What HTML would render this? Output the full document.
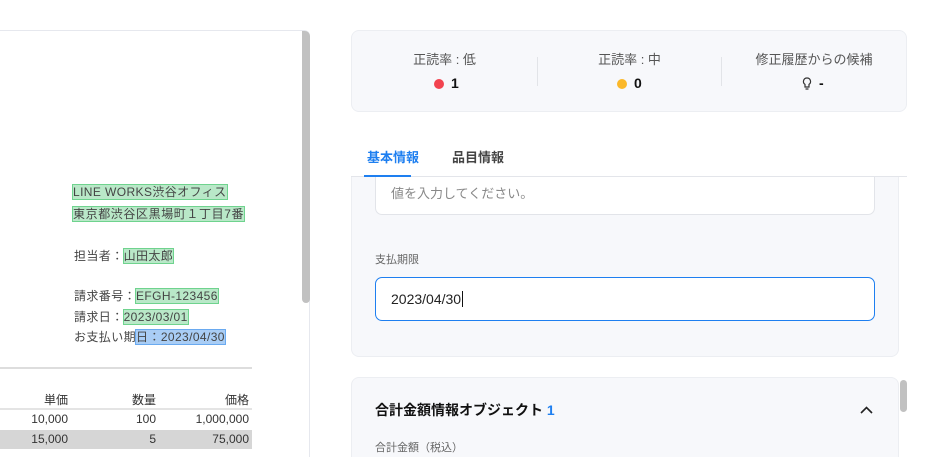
<!DOCTYPE html>
<html><head><meta charset="utf-8"><style>
*{box-sizing:border-box;margin:0;padding:0}
html,body{width:932px;height:457px;overflow:hidden}
body{background:#fff;font-family:"Liberation Sans","Noto Sans CJK JP",sans-serif;position:relative}
.a{position:absolute}
.doc{font-size:12px;color:#444;white-space:nowrap;letter-spacing:0.4px}
.g{background:#b9e8c8;outline:1.5px solid #6fd38e}
.b{background:#a9cdf5;outline:1.5px solid #6aaaf0}
.r{text-align:right;font-size:12px;color:#333}
</style></head><body>
<div class="a" style="left:0;top:0;width:932px;height:457px;overflow:hidden">
<div class="a" style="left:-10px;top:30px;width:320px;height:427px;border:1px solid #e6e8ee;border-bottom:none;border-radius:0 6px 0 0;background:#fff"></div>
<div class="a" style="left:302px;top:31px;width:8px;height:272px;background:#c1c1c1;border-radius:0 5px 4px 4px"></div>
<div class="a doc" style="left:73px;top:183px"><span class="g">LINE WORKS渋谷オフィス</span></div>
<div class="a doc" style="left:73px;top:205px;letter-spacing:0.6px"><span class="g">東京都渋谷区黒場町１丁目7番</span></div>
<div class="a doc" style="left:74px;top:247px">担当者：<span class="g">山田太郎</span></div>
<div class="a doc" style="left:74px;top:287px">請求番号：<span class="g">EFGH-123456</span></div>
<div class="a doc" style="left:74px;top:308px">請求日：<span class="g">2023/03/01</span></div>
<div class="a doc" style="left:74px;top:328px">お支払い期<span class="b">日：2023/04/30</span></div>
<div class="a" style="left:0;top:367px;width:252px;height:2px;background:#ddd"></div>
<div class="a" style="left:0;top:408px;width:252px;height:2px;background:#e4e4e4"></div>
<div class="a" style="left:0;top:430px;width:252px;height:19px;background:#d6d6d6"></div>
<div class="a r" style="left:0;top:391px;width:68px">単価</div>
<div class="a r" style="left:90px;top:391px;width:66px">数量</div>
<div class="a r" style="left:160px;top:391px;width:89px">価格</div>
<div class="a r" style="left:0;top:412px;width:68px">10,000</div>
<div class="a r" style="left:90px;top:412px;width:66px">100</div>
<div class="a r" style="left:160px;top:412px;width:89px">1,000,000</div>
<div class="a r" style="left:0;top:432px;width:68px">15,000</div>
<div class="a r" style="left:90px;top:432px;width:66px">5</div>
<div class="a r" style="left:160px;top:432px;width:89px">75,000</div>

<div class="a" style="left:351px;top:30px;width:556px;height:82px;background:#f7f8fb;border:1px solid #eceef2;border-radius:8px"></div>
<div class="a" style="left:537px;top:57px;width:1px;height:29px;background:#e2e4e8"></div>
<div class="a" style="left:721px;top:57px;width:1px;height:29px;background:#e2e4e8"></div>
<div class="a" style="left:351px;top:49px;width:187px;text-align:center;font-size:13px;color:#555">正読率 : 低</div>
<div class="a" style="left:537px;top:49px;width:185px;text-align:center;font-size:13px;color:#555">正読率 : 中</div>
<div class="a" style="left:721px;top:49px;width:186px;text-align:center;font-size:13px;color:#555">修正履歴からの候補</div>
<div class="a" style="left:434px;top:79px;width:10px;height:10px;border-radius:50%;background:#f2434f"></div>
<div class="a" style="left:451px;top:75px;font-size:14px;font-weight:bold;color:#111">1</div>
<div class="a" style="left:617px;top:79px;width:10px;height:10px;border-radius:50%;background:#fbb829"></div>
<div class="a" style="left:634px;top:75px;font-size:14px;font-weight:bold;color:#111">0</div>
<svg class="a" style="left:802px;top:77px" width="10" height="14" viewBox="0 0 10 14"><path d="M5 1a3.5 3.5 0 0 0-2 6.4V10h4V7.4A3.5 3.5 0 0 0 5 1zM3.5 12h3" fill="none" stroke="#333" stroke-width="1.2"/></svg>
<div class="a" style="left:819px;top:75px;font-size:14px;font-weight:bold;color:#111">-</div>

<div class="a" style="left:351px;top:177px;width:548px;height:180px;background:#f7f8fb;border:1px solid #eceef2;border-top:none;border-radius:0 0 8px 8px"></div>
<div class="a" style="left:375px;top:170px;width:500px;height:45px;background:#fff;border:1px solid #e2e4e9;border-radius:7px"></div>
<div class="a" style="left:351px;top:160px;width:556px;height:16px;background:#fff"></div>
<div class="a" style="left:367px;top:147px;font-size:13px;font-weight:bold;color:#1e7ff0">基本情報</div>
<div class="a" style="left:452px;top:147px;font-size:13px;font-weight:bold;color:#444">品目情報</div>
<div class="a" style="left:351px;top:176px;width:556px;height:1px;background:#e3e5ea"></div>
<div class="a" style="left:364px;top:175px;width:47px;height:2px;background:#1e7ff0"></div>
<div class="a" style="left:391px;top:183px;font-size:13px;color:#888">値を入力してください。</div>
<div class="a" style="left:375px;top:251px;font-size:11px;color:#666">支払期限</div>
<div class="a" style="left:375px;top:277px;width:500px;height:44px;background:#fff;border:1.5px solid #1e7ff0;border-radius:7px"></div>
<div class="a" style="left:391px;top:291px;font-size:14px;color:#222">2023/04/30<span style="border-left:1px solid #111;margin-left:1px"></span></div>

<div class="a" style="left:351px;top:377px;width:548px;height:80px;background:#f7f8fb;border:1px solid #eceef2;border-bottom:none;border-radius:8px 8px 0 0"></div>
<div class="a" style="left:900px;top:380px;width:7px;height:32px;background:#c1c1c1;border-radius:4px"></div>
<div class="a" style="left:375px;top:400px;font-size:14px;font-weight:bold;color:#111">合計金額情報オブジェクト <span style="color:#1e7ff0">1</span></div>
<svg class="a" style="left:859px;top:405px" width="15" height="10" viewBox="0 0 15 10"><path d="M2 8l5.5-5.5L13 8" fill="none" stroke="#222" stroke-width="1.6"/></svg>
<div class="a" style="left:375px;top:441px;font-size:11px;color:#666;line-height:14px">合計金額（税込）</div>
</div>
</body></html>
